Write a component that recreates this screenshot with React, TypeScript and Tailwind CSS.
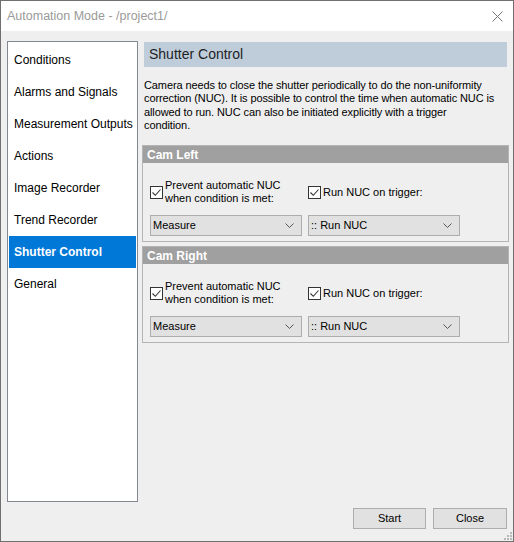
const menu = [
  "Conditions",
  "Alarms and Signals",
  "Measurement Outputs",
  "Actions",
  "Image Recorder",
  "Trend Recorder",
  "Shutter Control",
  "General",
];

function Check({ label }: { label: React.ReactNode }) {
  return (
    <label className="flex items-center">
      <span className="flex h-[13px] w-[13px] shrink-0 items-center justify-center border border-[#333] bg-white">
        <svg width="11" height="11" viewBox="0 0 11 11" fill="none">
          <path d="M1.5 5.5 L4.3 8.3 L9.5 2.5" stroke="#333" strokeWidth="1.1" />
        </svg>
      </span>
      <span className="ml-[2px] leading-[13px]">{label}</span>
    </label>
  );
}

function Combo({ value }: { value: string }) {
  return (
    <div className="flex h-[21px] w-[152px] items-center justify-between border border-[#adadad] bg-[#e1e1e1] pl-[2px] pr-[7px]">
      <span>{value}</span>
      <svg width="9" height="5" viewBox="0 0 9 5" fill="none">
        <path d="M0.5 0.5 L4.5 4.5 L8.5 0.5" stroke="#555" strokeWidth="1" />
      </svg>
    </div>
  );
}

function CamGroup({ title }: { title: string }) {
  return (
    <div className="ml-[-1px] mr-[-1px] border border-[#b4b4b4]">
      <div className="flex h-[17px] items-center bg-[#a0a0a0] pl-[4px] text-[12px] font-bold text-white">{title}</div>
      <div className="pl-[7px] pb-[5px] pt-[16px]">
        <div className="flex h-[26px] items-center">
          <div className="w-[158px]">
            <Check
              label={
                <>
                  Prevent automatic NUC
                  <br />
                  when condition is met:
                </>
              }
            />
          </div>
          <Check label="Run NUC on trigger:" />
        </div>
        <div className="mt-[10px] flex gap-[6px]">
          <Combo value="Measure" />
          <Combo value=":: Run NUC" />
        </div>
      </div>
    </div>
  );
}

export default function App() {
  return (
    <div
      className="relative flex h-[542px] w-[514px] flex-col border border-[#707070] bg-[#efefef] text-[11px] text-black"
      style={{ fontFamily: '"Segoe UI", "Liberation Sans", Arial, sans-serif' }}
    >
      <div className="flex h-[30px] shrink-0 items-center justify-between bg-white pl-[6px] pr-[10px]">
        <span className="text-[12.5px] text-[#9a9a9a]">Automation Mode - /project1/</span>
        <svg width="11" height="11" viewBox="0 0 11 11" fill="none">
          <path d="M0.5 0.5 L10.5 10.5 M10.5 0.5 L0.5 10.5" stroke="#777" strokeWidth="1" />
        </svg>
      </div>

      <div className="flex flex-1 flex-col pb-[12px] pl-[6px] pr-[5px] pt-[10px]">
        <div className="flex h-[461px] gap-[5px]">
          <div className="w-[131px] border border-[#828790] bg-white pl-[1px] pr-[1px] pt-[2px] text-[12px]">
            {menu.map((m) => (
              <div
                key={m}
                className={
                  m === "Shutter Control"
                    ? "flex h-[32px] items-center bg-[#0078d7] pl-[5px] font-bold text-white"
                    : "flex h-[32px] items-center pl-[5px]"
                }
              >
                {m}
              </div>
            ))}
          </div>

          <div className="flex w-[365px] flex-col pt-[1px]">
            <div className="mx-[1px] flex h-[25px] items-center bg-[#bfcddb] pl-[5px] text-[14px] text-[#1e1e1e]">
              Shutter Control
            </div>
            <p className="mt-[12px] whitespace-nowrap pl-[1px] leading-[13.3px] tracking-[-0.1px]">
              Camera needs to close the shutter periodically to do the non-uniformity
              <br />
              correction (NUC). It is possible to control the time when automatic NUC is
              <br />
              allowed to run. NUC can also be initiated explicitly with a trigger
              <br />
              condition.
            </p>
            <div className="mt-[13px] flex flex-col gap-[4px]">
              <CamGroup title="Cam Left" />
              <CamGroup title="Cam Right" />
            </div>
          </div>
        </div>

        <div className="mt-[6px] flex h-[21px] justify-end gap-[7px] pr-[1px]">
          <button className="h-[21px] w-[73px] border border-[#adadad] bg-[#e1e1e1]">Start</button>
          <button className="h-[21px] w-[74px] border border-[#adadad] bg-[#e1e1e1]">Close</button>
        </div>
      </div>

      <svg className="absolute bottom-[1px] right-[1px]" width="8" height="8" viewBox="0 0 8 8">
        <rect x="6" y="0" width="2" height="2" fill="#b8b8b8" />
        <rect x="3" y="3" width="2" height="2" fill="#b8b8b8" />
        <rect x="6" y="3" width="2" height="2" fill="#b8b8b8" />
        <rect x="0" y="6" width="2" height="2" fill="#b8b8b8" />
        <rect x="3" y="6" width="2" height="2" fill="#b8b8b8" />
        <rect x="6" y="6" width="2" height="2" fill="#b8b8b8" />
      </svg>
    </div>
  );
}
